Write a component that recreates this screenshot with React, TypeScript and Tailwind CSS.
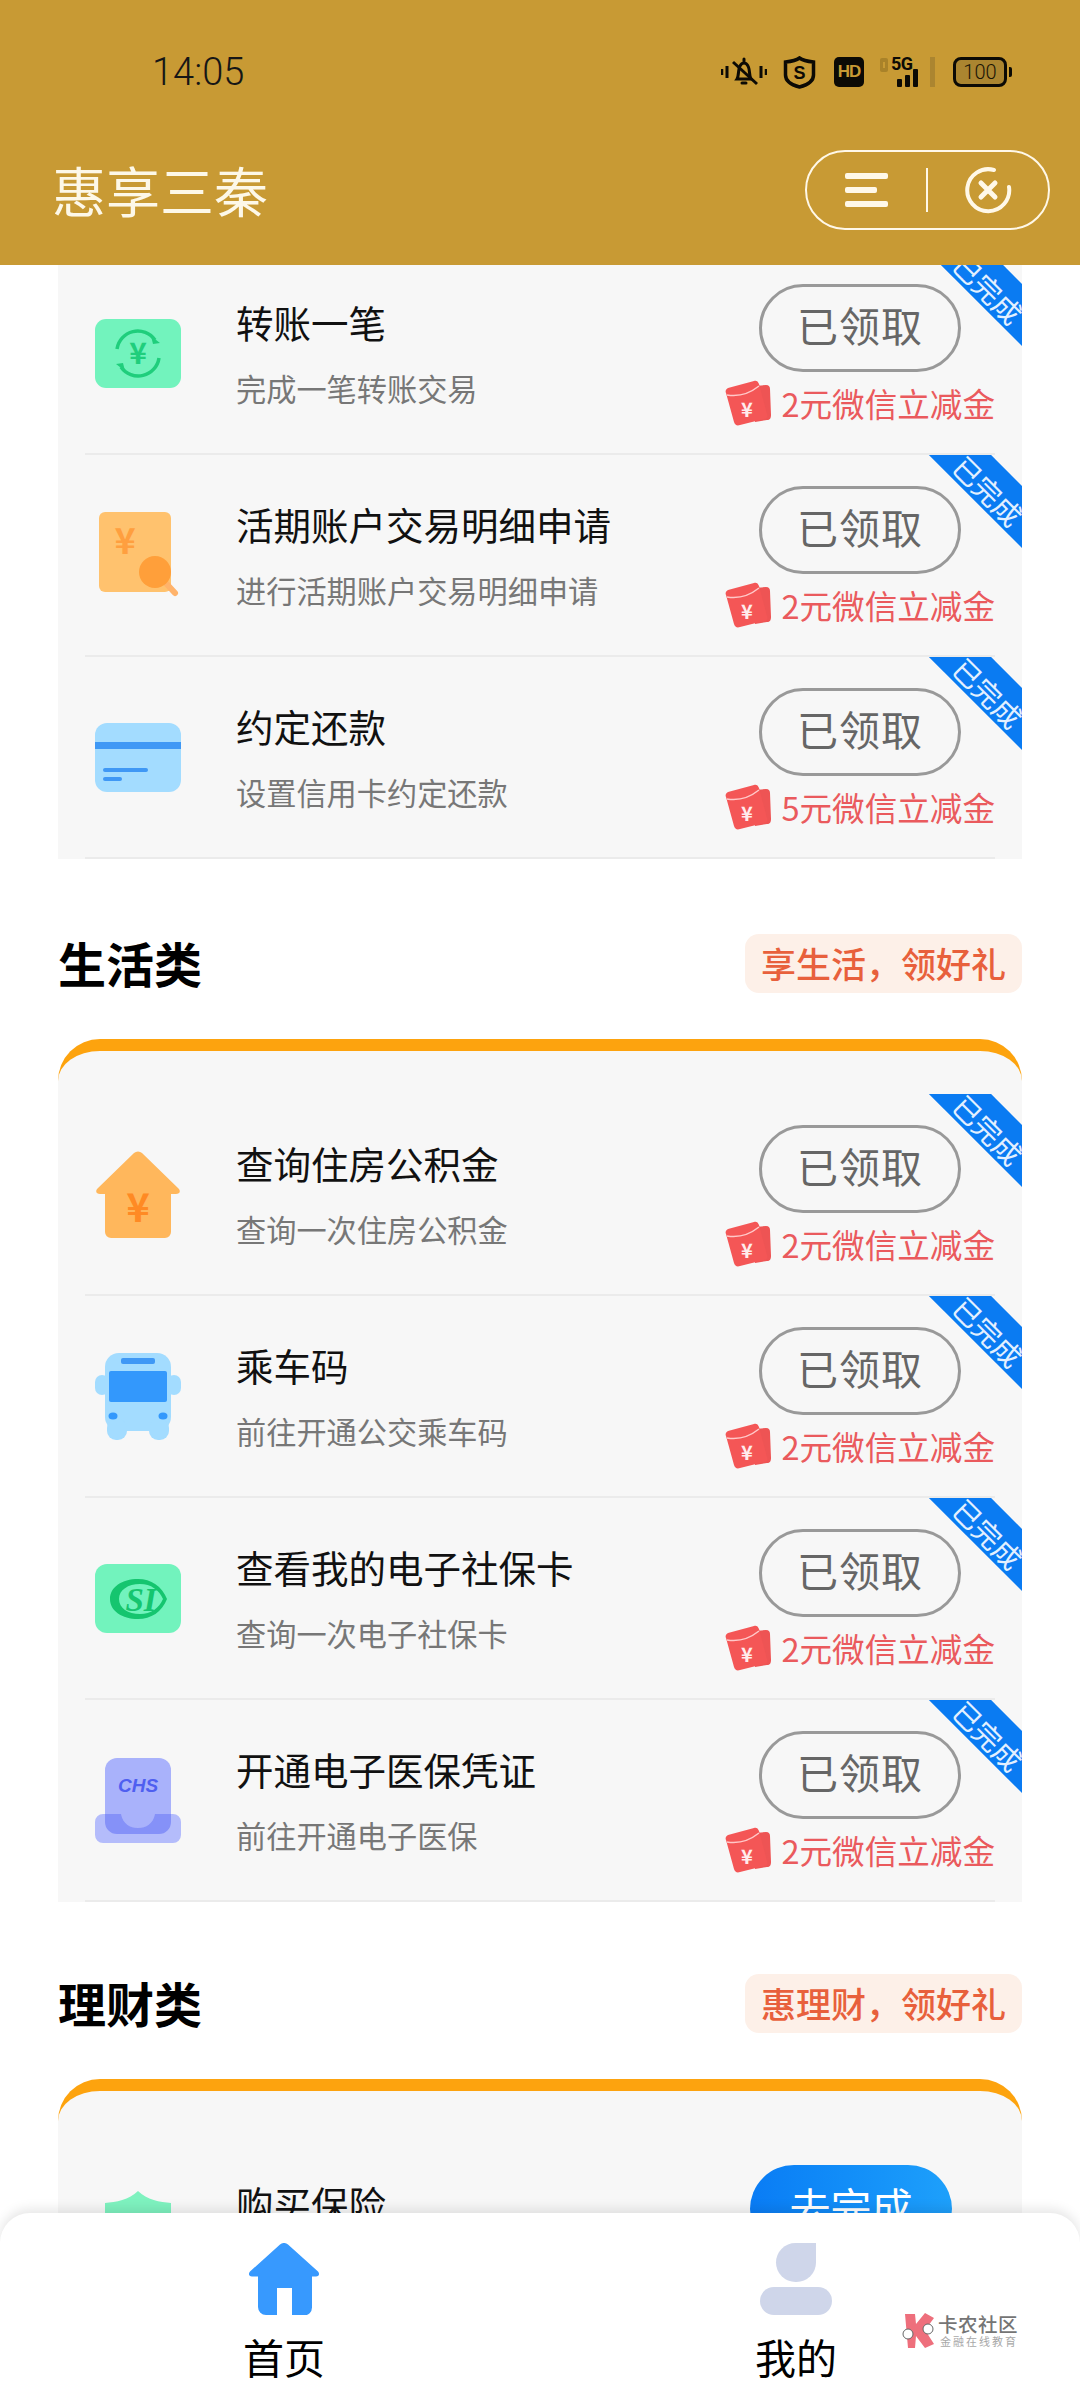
import type { ReactNode } from "react";

const cjk = "font-['Noto_Sans_CJK_SC','Liberation_Sans',sans-serif]";

function TransferIcon() {
  return (
    <svg width="86" height="69" viewBox="0 0 86 69">
      <rect width="86" height="69" rx="11" fill="#72f3bd" />
      <path d="M22 30a21 21 0 0 1 38-9M64 39a21 21 0 0 1-38 9" fill="none" stroke="#1fce7c" strokeWidth="3.5" />
      <path d="M65 24l-7 1-2-8zM21 45l7-1 2 8z" fill="#1fce7c" />
      <text x="43" y="45" textAnchor="middle" fontSize="30" fontWeight="700" fill="#1fce7c" fontFamily="Noto Sans CJK SC">¥</text>
    </svg>
  );
}

function DetailIcon() {
  return (
    <svg width="86" height="86" viewBox="0 0 86 86">
      <rect x="4" y="0" width="72" height="80" rx="6" fill="#ffc26e" />
      <text x="30" y="42" textAnchor="middle" fontSize="36" fontWeight="700" fill="#ff9f3f" fontFamily="Noto Sans CJK SC">¥</text>
      <path d="M68 68l12 13" stroke="#ffb36b" strokeWidth="6" strokeLinecap="round" />
      <circle cx="60" cy="60" r="16" fill="#ff9f3a" />
    </svg>
  );
}

function CardIcon() {
  return (
    <svg width="86" height="69" viewBox="0 0 86 69">
      <rect width="86" height="69" rx="12" fill="#a3dcff" />
      <rect y="19" width="86" height="7" fill="#3f98f5" />
      <rect x="8" y="45" width="45" height="4" rx="2" fill="#3f98f5" />
      <rect x="8" y="54" width="19" height="4" rx="2" fill="#3f98f5" />
    </svg>
  );
}

function HouseIcon() {
  return (
    <svg width="86" height="87" viewBox="0 0 86 87">
      <path d="M39 2a6 6 0 0 1 8 0l37 36c2 3 0 5-3 5h-5v38a6 6 0 0 1-6 6H16a6 6 0 0 1-6-6V43H5c-3 0-5-2-3-5z" fill="#ffb75c" />
      <text x="43" y="71" textAnchor="middle" fontSize="40" fontWeight="700" fill="#ff8a24" fontFamily="Noto Sans CJK SC">¥</text>
    </svg>
  );
}

function BusIcon() {
  return (
    <svg width="86" height="87" viewBox="0 0 86 87">
      <rect y="22" width="14" height="20" rx="7" fill="#a3dcff" />
      <rect x="72" y="22" width="14" height="20" rx="7" fill="#a3dcff" />
      <rect x="10" y="0" width="66" height="78" rx="14" fill="#a3dcff" />
      <rect x="12" y="66" width="20" height="21" rx="9" fill="#a3dcff" />
      <rect x="54" y="66" width="20" height="21" rx="9" fill="#a3dcff" />
      <rect x="26" y="5" width="34" height="6" rx="2" fill="#3f98f5" />
      <rect x="14" y="18" width="58" height="31" rx="2" fill="#3398fc" />
      <ellipse cx="18" cy="63" rx="4.5" ry="3.5" fill="#3398fc" />
      <ellipse cx="68" cy="63" rx="4.5" ry="3.5" fill="#3398fc" />
    </svg>
  );
}

function SocialIcon() {
  return (
    <svg width="86" height="69" viewBox="0 0 86 69">
      <rect width="86" height="69" rx="12" fill="#72f3bd" />
      <path
        fillRule="evenodd"
        d="M15 35c0-12 12-20 28-20 13 0 24 7 29 20-5 13-16 20-29 20-16 0-28-8-28-20zM24 35c0 9 9 15 21 15 11 0 19-6 23-15-4-9-12-15-23-15-12 0-21 6-21 15z"
        fill="#15c56f"
      />
      <text x="46" y="47" textAnchor="middle" fontSize="33" fontWeight="700" fontStyle="italic" fill="#15c56f" fontFamily="Liberation Serif">SI</text>
    </svg>
  );
}

function InsuranceIcon() {
  return (
    <svg width="86" height="85" viewBox="0 0 86 85">
      <rect x="10" y="0" width="66" height="76" rx="12" fill="#a9b2fb" />
      <text x="43" y="34" textAnchor="middle" fontSize="19" fontWeight="700" fontStyle="italic" fill="#4f5ff0" fontFamily="Liberation Sans">CHS</text>
      <path d="M8 56h18c2 10 9 14 17 14s15-4 17-14h18a8 8 0 0 1 8 8v13a8 8 0 0 1-8 8H8a8 8 0 0 1-8-8V64a8 8 0 0 1 8-8z" fill="#b4bcfb" />
      <path d="M10 56h16c2 10 9 14 17 14s15-4 17-14h16v8a12 12 0 0 1-12 12H22a12 12 0 0 1-12-12z" fill="#8591f8" />
    </svg>
  );
}

function ShieldIcon() {
  return (
    <svg width="86" height="86" viewBox="0 0 86 86">
      <path d="M43 0c9 9 22 11 33 12v28c0 20-15 36-33 46C25 76 10 60 10 40V12C21 11 34 9 43 0z" fill="#7ef2bf" />
    </svg>
  );
}

function RedPacket() {
  return (
    <svg width="46" height="46" viewBox="0 0 46 46">
      <path d="M30 6l11-1c3 0 4 2 4 4l1 26c0 3-1 5-4 5l-12 2z" fill="#ee5454" />
      <path d="M3 8L29 1c2-1 4 0 5 3l8 30c1 3 0 5-3 5l-24 6c-3 1-5 0-6-3L1 13c-1-2 0-4 2-5z" fill="#f45656" />
      <path d="M2 15c12 2 22-1 32-9" fill="none" stroke="#ffc9c9" strokeWidth="1.5" />
      <text x="22" y="37" textAnchor="middle" fontSize="20" fontWeight="700" fill="#ffecec" fontFamily="Noto Sans CJK SC">¥</text>
    </svg>
  );
}

type RowProps = {
  icon: ReactNode;
  title: string;
  sub: string;
  reward?: string;
  pending?: boolean;
};

function TaskRow({ icon, title, sub, reward = "2元", pending = false }: RowProps) {
  return (
    <div className="relative overflow-hidden px-[27px]">
      {!pending && (
        <div className="absolute right-[-50px] top-[10px] flex h-[44px] w-[160px] rotate-45 items-center justify-center bg-[#0a7bf2] pt-[9px] text-[28px] leading-none text-[#e3f0ff]">
          已完成
        </div>
      )}
      <div className="flex h-[202px] border-b-2 border-[#ebebeb]">
        <div className="ml-[10px] flex h-[200px] w-[86px] shrink-0 items-center justify-center">{icon}</div>
        <div className="ml-[55px] pt-[45px]">
          <div className="text-[37.5px] leading-[48px] text-[#111]">{title}</div>
          <div className="mt-[22px] text-[30.2px] leading-[40px] text-[#777]">{sub}</div>
        </div>
        <div className="ml-auto flex flex-col items-end pt-[31px]">
          {pending ? (
            <div className="mr-[43px] flex h-[88px] w-[202px] items-center justify-center rounded-[44px] bg-gradient-to-r from-[#0a7cf5] to-[#1ea0fb] pb-[8px] text-[41px] leading-none text-white">
              去完成
            </div>
          ) : (
            <div className="mr-[34px] flex h-[88px] w-[202px] items-center justify-center rounded-[44px] border-[3px] border-[#999] pb-[8px] text-[41px] leading-none tracking-[1px] text-[#666]">
              已领取
            </div>
          )}
          <div className="mt-[8px] flex h-[46px] items-center gap-[10px]">
            <RedPacket />
            <span className="text-[32.6px] leading-none text-[#ea5a5d]">{reward}微信立减金</span>
          </div>
        </div>
      </div>
    </div>
  );
}

function SectionHead({ title, tag, gap }: { title: string; tag: string; gap: string }) {
  return (
    <div className={`mx-[58px] mb-[46px] flex items-center justify-between ${gap}`}>
      <div className="pb-[3px] text-[48px] font-bold leading-[56px] text-black">{title}</div>
      <div className="flex h-[59px] w-[277px] items-center justify-center rounded-[14px] bg-[#fdf0e8] pb-[2px] text-[35px] font-medium leading-none text-[#e8603c]">
        {tag}
      </div>
    </div>
  );
}

function StatusBar() {
  return (
    <div className="flex h-[144px] items-center pl-[152px] pr-[68px]">
      <span className="font-['Roboto',sans-serif] text-[38px] font-light text-[#161616]">14:05</span>
      <div className="ml-auto flex items-center text-[#0c0a05]">
        <svg width="46" height="32" viewBox="0 0 46 32" fill="none" stroke="currentColor">
          <path d="M1 13v6M45 13v6" strokeWidth="2.5" />
          <path d="M6 10v12M40 10v12" strokeWidth="3" />
          <path d="M23 3v2M16 23c2-3 1-10 3-13 2-4 6-4 8 0 2 3 1 10 3 13zM21 27h4" strokeWidth="3" strokeLinecap="round" />
          <path d="M12 6l24 22" strokeWidth="3" />
        </svg>
        <svg className="ml-[16px]" width="33" height="33" viewBox="0 0 33 33">
          <path d="M16.5 2c4 3 9 3.500 14 4v13c0 6-6 10-14 12C8.500 29 2.500 25 2.500 19V6c5-.5 10-1 14-4z" fill="none" stroke="currentColor" strokeWidth="3.500" />
          <text x="16.500" y="23" textAnchor="middle" fontSize="18" fontWeight="700" fill="currentColor" fontFamily="Liberation Sans">S</text>
        </svg>
        <div className="ml-[18px] flex h-[30px] w-[30px] items-center justify-center rounded-[5px] bg-[#0c0a05] font-['Liberation_Sans',sans-serif] text-[17px] font-bold tracking-[-1px] text-[#c89a34]">
          HD
        </div>
        <div className="relative ml-[16px] h-[30px] w-[55px]">
          <span className="absolute left-[11px] top-[-4px] font-['Roboto',sans-serif] text-[18px] font-bold leading-[22px] tracking-[-0.5px]">5G</span>
          <span className="absolute left-[0px] top-[1px] h-[14px] w-[8px] rounded-[2px] border-x-[3px] border-y-[4px] border-[#a98229]" />
          <div className="absolute bottom-0 left-[17px] flex items-end gap-[3px]">
            <span className="h-[8px] w-[5px] rounded-[1px] bg-[#0c0a05]" />
            <span className="h-[12px] w-[5px] rounded-[1px] bg-[#0c0a05]" />
            <span className="h-[18px] w-[5px] rounded-[1px] bg-[#0c0a05]" />
          </div>
          <span className="absolute bottom-0 right-0 h-[30px] w-[5px] bg-[#ab8530]" />
        </div>
        <div className="ml-[18px] flex h-[30px] w-[54px] items-center justify-center rounded-[8px] border-[3px] border-[#0c0a05] bg-[#ab8530] font-['Roboto',sans-serif] text-[20px] font-light leading-none text-[#1a1405]">
          100
        </div>
        <span className="ml-[2px] h-[10px] w-[3px] rounded-r-[2px] bg-[#0c0a05]" />
      </div>
    </div>
  );
}

function Header() {
  return (
    <header className="relative z-10 h-[265px] shrink-0 bg-[#c89a34]">
      <StatusBar />
      <div className="mt-[6px] flex items-center justify-between pl-[52px] pr-[30px]">
        <h1 className="text-[54px] font-normal leading-[80px] text-[#fdf8e8]">惠享三秦</h1>
        <div className="flex h-[80px] w-[245px] items-center rounded-[40px] border-2 border-[#fff8e8]">
          <div className="ml-[38px] flex w-[43px] flex-col gap-[8px]">
            <span className="h-[6px] w-[43px] rounded-[2px] bg-[#fff8e8]" />
            <span className="h-[6px] w-[32px] rounded-[2px] bg-[#fff8e8]" />
            <span className="h-[6px] w-[43px] rounded-[2px] bg-[#fff8e8]" />
          </div>
          <span className="ml-[38px] h-[44px] w-[2px] bg-[#fff8e8]" />
          <svg className="ml-[36px]" width="48" height="48" viewBox="0 0 48 48" fill="none" stroke="#fff8e8">
            <path d="M30 4a21 21 0 1 0 15 17" strokeWidth="4" strokeLinecap="round" />
            <path d="M17 17l14 14M31 17L17 31" strokeWidth="5" strokeLinecap="round" />
          </svg>
        </div>
      </div>
    </header>
  );
}

function BottomNav() {
  return (
    <nav className="absolute inset-x-0 bottom-0 z-20 grid h-[187px] grid-cols-2 rounded-t-[30px] bg-white px-[28px] pt-[30px] shadow-[0_-4px_12px_rgba(0,0,0,0.1)]">
      <div className="flex flex-col items-center">
        <svg width="72" height="72" viewBox="0 0 72 72">
          <path d="M32 1.500a6 6 0 0 1 8 0l30 27c2 2.500 1 5-2 5h-4v31a8 8 0 0 1-8 8H44V45H29v27H18a8 8 0 0 1-8-8V33.500H4c-3 0-4-2.500-2-5z" fill="#3799fe" />
        </svg>
        <span className="mt-[17px] text-[41px] leading-[48px] text-black">首页</span>
      </div>
      <div className="flex flex-col items-center">
        <div className="flex h-[72px] w-[72px] flex-col items-center">
          <span className="h-[39px] w-[40px] rounded-[20px_0_20px_20px] bg-[#cfd6ea]" />
          <span className="mt-[5px] h-[28px] w-[72px] rounded-[14px] bg-[#cfd6ea]" />
        </div>
        <span className="mt-[17px] text-[41px] leading-[48px] text-black">我的</span>
      </div>
    </nav>
  );
}

function Watermark() {
  return (
    <div className="absolute bottom-[52px] left-[900px] z-30 flex items-center gap-[1px]">
      <svg width="37" height="35" viewBox="0 0 37 35">
        <path d="M5 1h10l1 10 9-11 9 5-9 12 9 14-9 4-9-12-1 12H8z" fill="#ee6f7c" />
        <circle cx="8" cy="21" r="5" fill="#fff" stroke="#666" strokeWidth="1" />
        <circle cx="28" cy="16" r="5" fill="#fff" stroke="#666" strokeWidth="1" />
      </svg>
      <div className="flex flex-col">
        <span className="text-[19.500px] font-medium leading-[22px] tracking-[0.5px] text-[#757575]">卡农社区</span>
        <span className="pl-[2px] text-[11px] leading-[13px] tracking-[2px] text-[#a8a8a8]">金融在线教育</span>
      </div>
    </div>
  );
}

export default function App() {
  return (
    <div className={`relative flex h-[2400px] w-[1080px] flex-col overflow-hidden bg-white ${cjk}`}>
      <Header />
      <main className="flex-1 overflow-hidden">
        <section className="mx-[58px] -mt-[12px] bg-[#f7f7f7]">
          <TaskRow icon={<TransferIcon />} title="转账一笔" sub="完成一笔转账交易" />
          <TaskRow icon={<DetailIcon />} title="活期账户交易明细申请" sub="进行活期账户交易明细申请" />
          <TaskRow icon={<CardIcon />} title="约定还款" sub="设置信用卡约定还款" reward="5元" />
        </section>

        <SectionHead title="生活类" tag="享生活，领好礼" gap="mt-[75px]" />
        <section className="mx-[58px] rounded-t-[42px] border-t-[12px] border-[#fda30e] bg-[#f7f7f7] pt-[43px]">
          <TaskRow icon={<HouseIcon />} title="查询住房公积金" sub="查询一次住房公积金" />
          <TaskRow icon={<BusIcon />} title="乘车码" sub="前往开通公交乘车码" />
          <TaskRow icon={<SocialIcon />} title="查看我的电子社保卡" sub="查询一次电子社保卡" />
          <TaskRow icon={<InsuranceIcon />} title="开通电子医保凭证" sub="前往开通电子医保" />
        </section>

        <SectionHead title="理财类" tag="惠理财，领好礼" gap="mt-[72px]" />
        <section className="mx-[58px] rounded-t-[42px] border-t-[12px] border-[#fda30e] bg-[#f7f7f7] pt-[43px]">
          <TaskRow icon={<ShieldIcon />} title="购买保险" sub="购买一笔保险" pending />
        </section>
      </main>
      <BottomNav />
      <Watermark />
    </div>
  );
}
